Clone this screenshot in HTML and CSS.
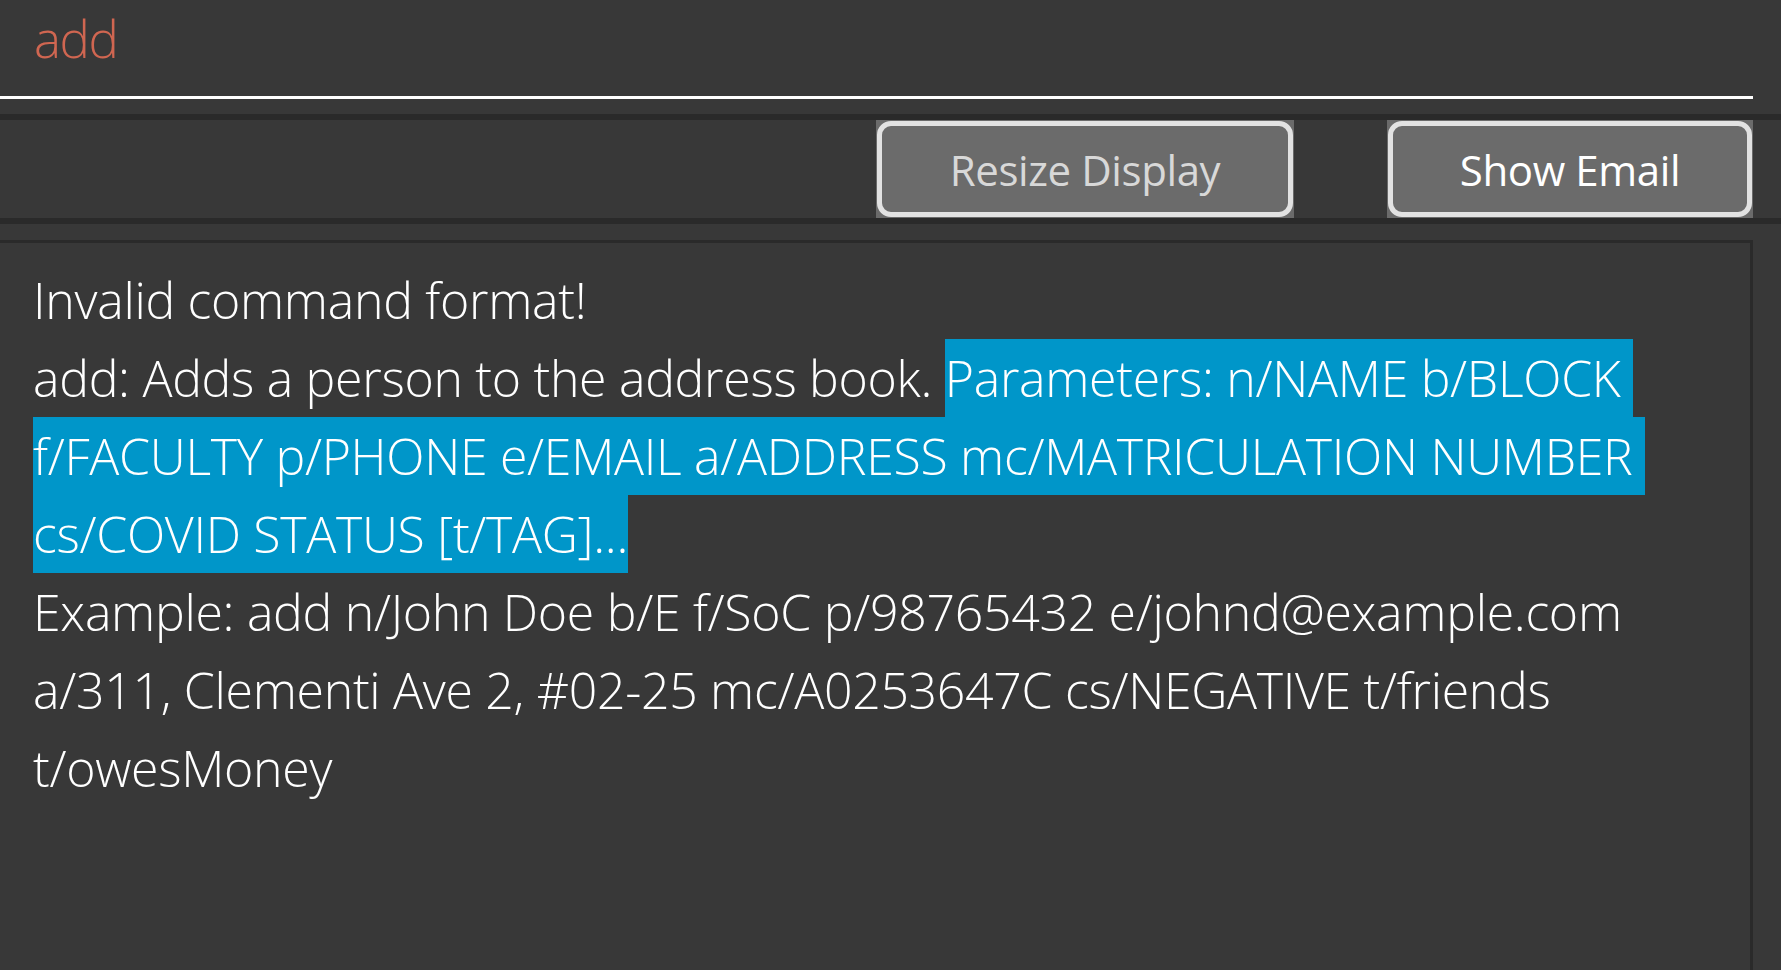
FILE: index.html
```html
<!DOCTYPE html>
<html>
<head>
<meta charset="utf-8">
<link rel="stylesheet" href="styles.css">
</head>
<body>
<div class="window">
  <div class="command-box"><span class="command-text">add</span></div>
  <div class="command-rule"></div>
  <div class="gap-small"></div>
  <div class="divider"></div>
  <div class="button-bar">
    <button class="btn btn-resize"><span class="btn-face">Resize Display</span></button>
    <button class="btn btn-email"><span class="btn-face">Show Email</span></button>
  </div>
  <div class="divider"></div>
  <div class="gap-medium"></div>
  <div class="result-display">
    <div class="line">Invalid command format!</div>
    <div class="line">add: Adds a person to the address book. <span class="hl">Parameters: n/NAME b/BLOCK </span></div>
    <div class="line"><span class="hl">f/FACULTY p/PHONE e/EMAIL a/ADDRESS mc/MATRICULATION NUMBER </span></div>
    <div class="line"><span class="hl">cs/COVID STATUS [t/TAG]...</span></div>
    <div class="line">Example: add n/John Doe b/E f/SoC p/98765432 e/johnd@example.com</div>
    <div class="line">a/311, Clementi Ave 2, #02-25 mc/A0253647C cs/NEGATIVE t/friends</div>
    <div class="line">t/owesMoney</div>
  </div>
</div>
</body>
</html>
```

FILE: styles.css
```css
html, body {
  margin: 0;
  padding: 0;
  background: #383838;
  overflow: hidden;
}
body {
  width: 1781px;
  height: 970px;
  font-family: "Open Sans", "Noto Sans", sans-serif;
}
.window {
  display: flex;
  flex-direction: column;
  height: 970px;
}
.command-box {
  height: 96px;
  padding-left: 34px;
  display: flex;
  align-items: flex-start;
}
.command-text {
  color: #d06651;
  font-size: 51px;
  font-weight: 300;
  letter-spacing: -1.5px;
  line-height: 76px;
}
.command-rule {
  width: 1753px;
  height: 3px;
  background: #ffffff;
}
.gap-small { height: 15px; }
.gap-medium { height: 16px; }
.divider {
  height: 6px;
  background: #2a2a2a;
}
.button-bar {
  height: 98px;
  display: flex;
  justify-content: flex-end;
  gap: 93px;
  padding-right: 28px;
}
.btn {
  margin: 0;
  padding: 1px;
  border: none;
  background: #6b6b6b;
  height: 98px;
  display: flex;
  font-family: "Open Sans", "Noto Sans", sans-serif;
  font-size: 42px;
  font-weight: 400;
  letter-spacing: -0.4px;
}
.btn-resize { width: 418px; color: #d8d8d8; }
.btn-email { width: 366px; color: #ffffff; }
.btn-face {
  flex: 1;
  display: flex;
  align-items: center;
  justify-content: center;
  border: 5px solid #e2e2e2;
  border-radius: 14px;
}
.result-display {
  flex: 1;
  width: 1717px;
  border-top: 3px solid #2a2a2a;
  border-right: 3px solid #2a2a2a;
  padding: 18px 0 0 33px;
  color: #ffffff;
  font-size: 50px;
  font-weight: 300;
  letter-spacing: -0.3px;
}
.line {
  height: 78px;
  line-height: 78px;
  white-space: pre;
}
.hl {
  background: #0096c9;
  padding: 5px 0;
}
```
